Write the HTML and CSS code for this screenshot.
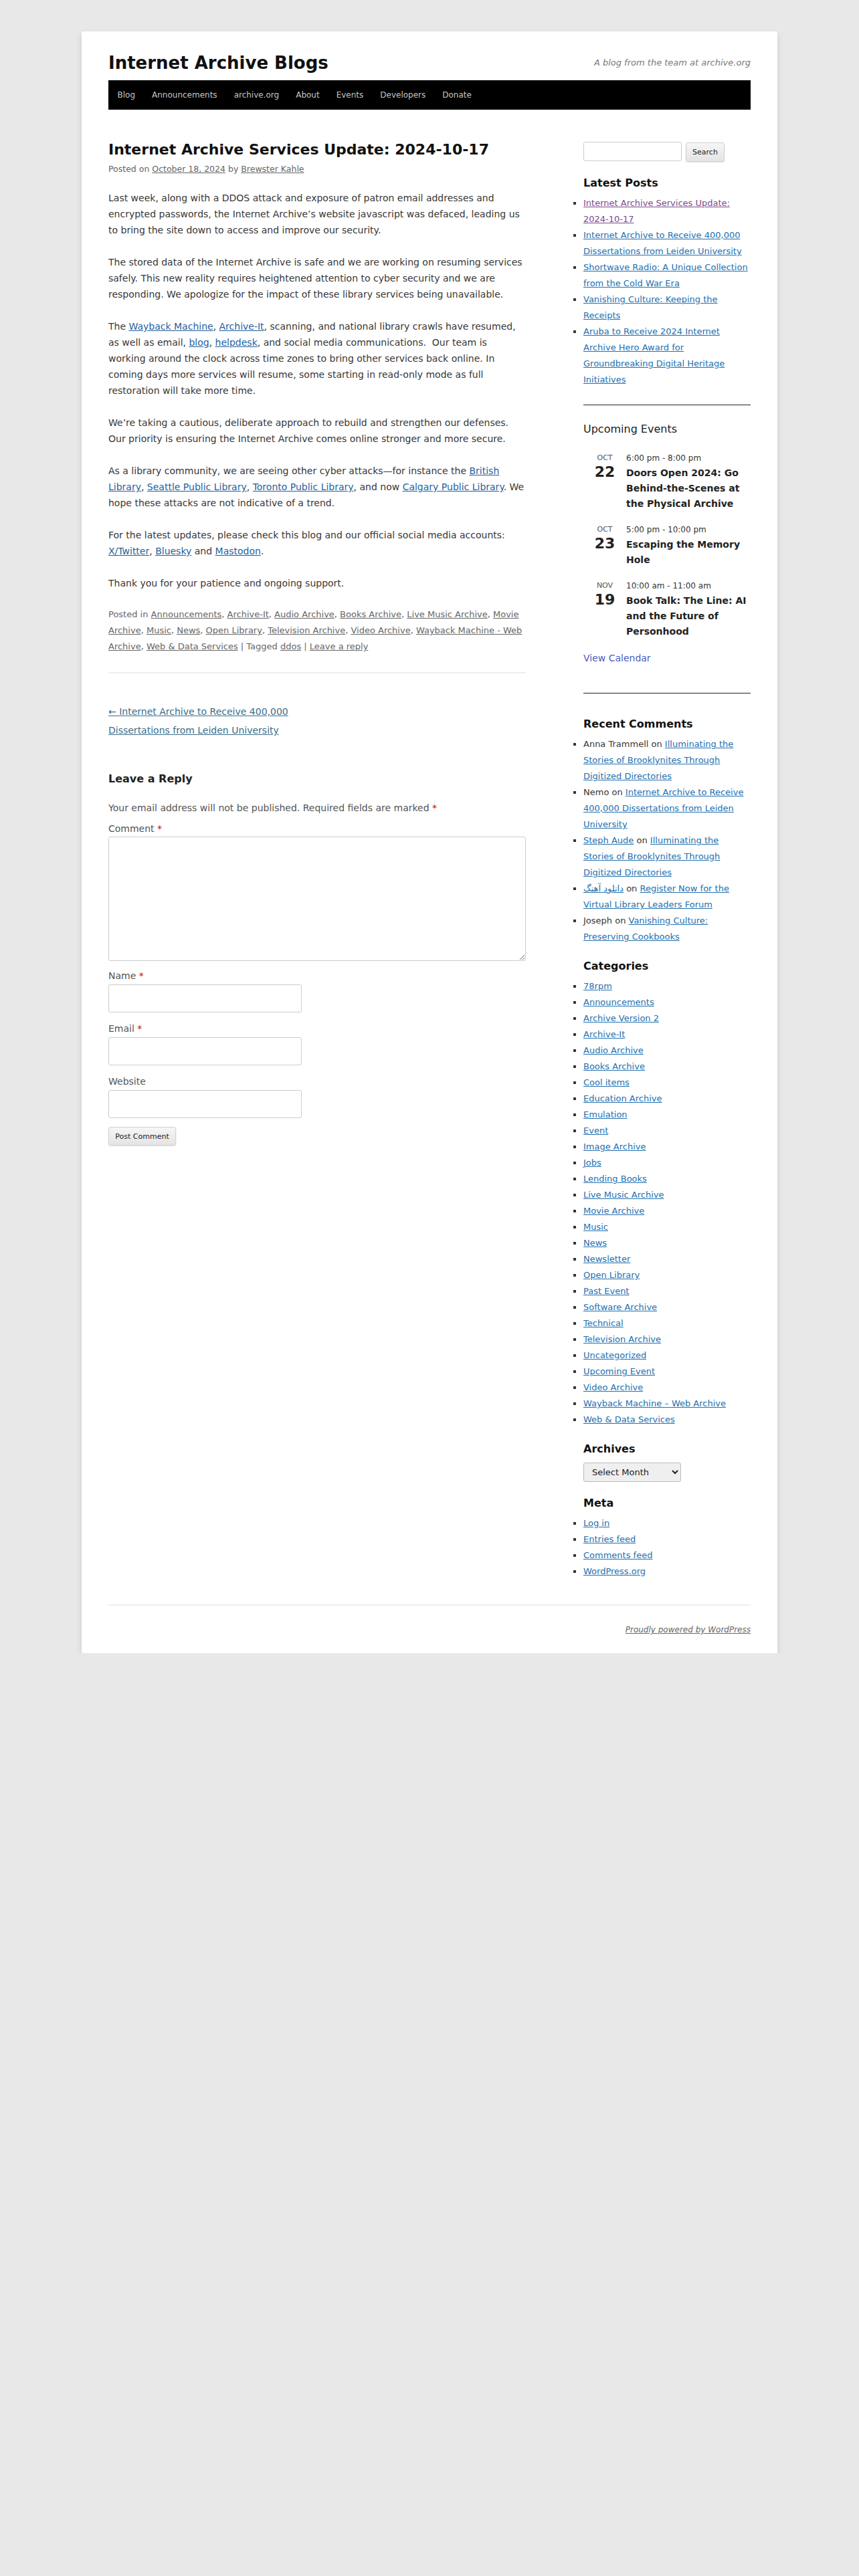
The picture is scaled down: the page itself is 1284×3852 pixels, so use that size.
FILE: index.html
```html
<!DOCTYPE html>
<html lang="en">
<head>
    <meta charset="UTF-8">
    <meta name="viewport" content="width=device-width, initial-scale=1.0">
    <title>Internet Archive Services Update: 2024-10-17 | Internet Archive Blogs</title>
    <link rel="stylesheet" href="styles.css">
</head>
<body>
    <div class="page">
        <header class="site-header">
            <div class="branding">
                <h1 class="site-title"><a href="#">Internet Archive Blogs</a></h1>
                <p class="site-description">A blog from the team at archive.org</p>
            </div>
            <nav class="main-nav">
                <ul>
                    <li><a href="#">Blog</a></li>
                    <li><a href="#">Announcements</a></li>
                    <li><a href="#">archive.org</a></li>
                    <li><a href="#">About</a></li>
                    <li><a href="#">Events</a></li>
                    <li><a href="#">Developers</a></li>
                    <li><a href="#">Donate</a></li>
                </ul>
            </nav>
        </header>

        <div class="site-body">
            <main class="content">
                <article class="post">
                    <h2 class="entry-title">Internet Archive Services Update: 2024-10-17</h2>
                    <div class="entry-meta">Posted on <a href="#">October 18, 2024</a> by <a href="#">Brewster Kahle</a></div>

                    <div class="entry-content">
                        <p>Last week, along with a DDOS attack and exposure of patron email addresses and encrypted passwords, the Internet Archive&rsquo;s website javascript was defaced, leading us to bring the site down to access and improve our security.</p>
                        <p>The stored data of the Internet Archive is safe and we are working on resuming services safely. This new reality requires heightened attention to cyber security and we are responding. We apologize for the impact of these library services being unavailable.</p>
                        <p>The <a href="#">Wayback Machine</a>, <a href="#">Archive-It</a>, scanning, and national library crawls have resumed, as well as email, <a href="#">blog</a>, <a href="#">helpdesk</a>, and social media communications.&nbsp; Our team is working around the clock across time zones to bring other services back online. In coming days more services will resume, some starting in read-only mode as full restoration will take more time.</p>
                        <p>We&rsquo;re taking a cautious, deliberate approach to rebuild and strengthen our defenses. Our priority is ensuring the Internet Archive comes online stronger and more secure.</p>
                        <p>As a library community, we are seeing other cyber attacks&mdash;for instance the <a href="#">British Library</a>, <a href="#">Seattle Public Library</a>, <a href="#">Toronto Public Library</a>, and now <a href="#">Calgary Public Library</a>. We hope these attacks are not indicative of a trend.</p>
                        <p>For the latest updates, please check this blog and our official social media accounts: <a href="#">X/Twitter</a>, <a href="#">Bluesky</a> and <a href="#">Mastodon</a>.</p>
                        <p>Thank you for your patience and ongoing support.</p>
                    </div>

                    <footer class="entry-footer">
                        Posted in <a href="#">Announcements</a>, <a href="#">Archive-It</a>, <a href="#">Audio Archive</a>, <a href="#">Books Archive</a>, <a href="#">Live Music Archive</a>, <a href="#">Movie Archive</a>, <a href="#">Music</a>, <a href="#">News</a>, <a href="#">Open Library</a>, <a href="#">Television Archive</a>, <a href="#">Video Archive</a>, <a href="#">Wayback Machine - Web Archive</a>, <a href="#">Web &amp; Data Services</a> | Tagged <a href="#">ddos</a> | <a href="#">Leave a reply</a>
                    </footer>
                </article>

                <nav class="post-nav">
                    <div class="nav-previous"><a href="#">&larr; Internet Archive to Receive 400,000 Dissertations from Leiden University</a></div>
                </nav>

                <section class="comments">
                    <h3 class="reply-title">Leave a Reply</h3>
                    <form class="comment-form">
                        <p class="comment-notes">Your email address will not be published. Required fields are marked <span class="required">*</span></p>
                        <div class="field field-comment">
                            <label for="comment">Comment <span class="required">*</span></label>
                            <textarea id="comment"></textarea>
                        </div>
                        <div class="field">
                            <label for="author">Name <span class="required">*</span></label>
                            <input type="text" id="author">
                        </div>
                        <div class="field">
                            <label for="email">Email <span class="required">*</span></label>
                            <input type="text" id="email">
                        </div>
                        <div class="field">
                            <label for="url">Website</label>
                            <input type="text" id="url">
                        </div>
                        <button type="submit" class="btn">Post Comment</button>
                    </form>
                </section>
            </main>

            <aside class="sidebar">
                <form class="search-form">
                    <input type="text" class="search-input">
                    <button type="submit" class="btn search-btn">Search</button>
                </form>

                <section class="widget">
                    <h3 class="widget-title">Latest Posts</h3>
                    <ul>
                        <li><a href="#" class="visited">Internet Archive Services Update: 2024-10-17</a></li>
                        <li><a href="#">Internet Archive to Receive 400,000 Dissertations from Leiden University</a></li>
                        <li><a href="#">Shortwave Radio: A Unique Collection from the Cold War Era</a></li>
                        <li><a href="#">Vanishing Culture: Keeping the Receipts</a></li>
                        <li><a href="#">Aruba to Receive 2024 Internet Archive Hero Award for Groundbreaking Digital Heritage Initiatives</a></li>
                    </ul>
                </section>

                <section class="widget widget-events">
                    <h3 class="events-title">Upcoming Events</h3>
                    <ul class="events">
                        <li class="event">
                            <div class="event-date"><span class="month">OCT</span><span class="day">22</span></div>
                            <div class="event-info">
                                <div class="event-time">6:00 pm - 8:00 pm</div>
                                <div class="event-name">Doors Open 2024: Go Behind-the-Scenes at the Physical Archive</div>
                            </div>
                        </li>
                        <li class="event">
                            <div class="event-date"><span class="month">OCT</span><span class="day">23</span></div>
                            <div class="event-info">
                                <div class="event-time">5:00 pm - 10:00 pm</div>
                                <div class="event-name">Escaping the Memory Hole</div>
                            </div>
                        </li>
                        <li class="event">
                            <div class="event-date"><span class="month">NOV</span><span class="day">19</span></div>
                            <div class="event-info">
                                <div class="event-time">10:00 am - 11:00 am</div>
                                <div class="event-name">Book Talk: The Line: AI and the Future of Personhood</div>
                            </div>
                        </li>
                    </ul>
                    <a href="#" class="view-calendar">View Calendar</a>
                </section>

                <section class="widget widget-after-rule">
                    <h3 class="widget-title">Recent Comments</h3>
                    <ul>
                        <li>Anna Trammell on <a href="#">Illuminating the Stories of Brooklynites Through Digitized Directories</a></li>
                        <li>Nemo on <a href="#">Internet Archive to Receive 400,000 Dissertations from Leiden University</a></li>
                        <li><a href="#">Steph Aude</a> on <a href="#">Illuminating the Stories of Brooklynites Through Digitized Directories</a></li>
                        <li><a href="#">دانلود آهنگ</a> on <a href="#">Register Now for the Virtual Library Leaders Forum</a></li>
                        <li>Joseph on <a href="#">Vanishing Culture: Preserving Cookbooks</a></li>
                    </ul>
                </section>

                <section class="widget">
                    <h3 class="widget-title">Categories</h3>
                    <ul>
                        <li><a href="#">78rpm</a></li>
                        <li><a href="#">Announcements</a></li>
                        <li><a href="#">Archive Version 2</a></li>
                        <li><a href="#">Archive-It</a></li>
                        <li><a href="#">Audio Archive</a></li>
                        <li><a href="#">Books Archive</a></li>
                        <li><a href="#">Cool items</a></li>
                        <li><a href="#">Education Archive</a></li>
                        <li><a href="#">Emulation</a></li>
                        <li><a href="#">Event</a></li>
                        <li><a href="#">Image Archive</a></li>
                        <li><a href="#">Jobs</a></li>
                        <li><a href="#">Lending Books</a></li>
                        <li><a href="#">Live Music Archive</a></li>
                        <li><a href="#">Movie Archive</a></li>
                        <li><a href="#">Music</a></li>
                        <li><a href="#">News</a></li>
                        <li><a href="#">Newsletter</a></li>
                        <li><a href="#">Open Library</a></li>
                        <li><a href="#">Past Event</a></li>
                        <li><a href="#">Software Archive</a></li>
                        <li><a href="#">Technical</a></li>
                        <li><a href="#">Television Archive</a></li>
                        <li><a href="#">Uncategorized</a></li>
                        <li><a href="#">Upcoming Event</a></li>
                        <li><a href="#">Video Archive</a></li>
                        <li><a href="#">Wayback Machine &ndash; Web Archive</a></li>
                        <li><a href="#">Web &amp; Data Services</a></li>
                    </ul>
                </section>

                <section class="widget">
                    <h3 class="widget-title">Archives</h3>
                    <select class="archive-select">
                        <option>Select Month</option>
                    </select>
                </section>

                <section class="widget">
                    <h3 class="widget-title">Meta</h3>
                    <ul>
                        <li><a href="#">Log in</a></li>
                        <li><a href="#">Entries feed</a></li>
                        <li><a href="#">Comments feed</a></li>
                        <li><a href="#">WordPress.org</a></li>
                    </ul>
                </section>
            </aside>
        </div>

        <footer class="site-footer">
            <a href="#">Proudly powered by WordPress</a>
        </footer>
    </div>
</body>
</html>
```

FILE: styles.css
```css
body {
    margin: 0;
    background-color: #e8e8e8;
    font-family: "DejaVu Sans", sans-serif;
    font-size: 14px;
    line-height: 24px;
    color: #373737;
}
a {
    color: #1f5f9e;
}
.page {
    width: 960px;
    margin: 47px auto 0;
    padding: 0 40px;
    background: #fff;
    box-shadow: 0 4px 8px rgba(0, 0, 0, 0.13);
}

/* header */
.site-header {
    padding-top: 29px;
}
.branding {
    display: flex;
    justify-content: space-between;
    align-items: center;
    margin-bottom: 8px;
}
.site-title {
    margin: 0;
    font-size: 26px;
    line-height: 36px;
    font-weight: bold;
}
.site-title a {
    color: #111;
    text-decoration: none;
}
.site-description {
    margin: 0;
    font-size: 13px;
    font-style: italic;
    color: #7a7a7a;
}
.main-nav {
    background: #000;
    height: 44px;
}
.main-nav ul {
    display: flex;
    margin: 0;
    padding: 0 0 0 1px;
    list-style: none;
}
.main-nav a {
    display: block;
    padding: 0 12.5px;
    line-height: 44px;
    font-size: 12px;
    color: #c6c6c6;
    text-decoration: none;
}

/* layout */
.site-body {
    display: flex;
    align-items: flex-start;
    padding: 45px 0 37px;
}
.content {
    width: 624px;
}
.sidebar {
    width: 250px;
    margin-left: auto;
    padding-top: 3px;
}

/* post */
.entry-title {
    margin: 0;
    font-size: 22px;
    line-height: 30px;
    color: #111;
}
.entry-meta {
    margin-top: 4px;
    font-size: 12.5px;
    line-height: 20px;
    color: #666;
}
.entry-meta a,
.entry-footer a {
    color: #666;
}
.entry-content {
    margin-top: 21px;
}
.entry-content p {
    margin: 0 0 24px;
}
.entry-footer {
    margin-top: -1px;
    font-size: 13px;
    line-height: 24px;
    color: #666;
}
.post {
    padding-bottom: 26px;
    border-bottom: 2px solid #eee;
}
.post-nav {
    margin-top: 43px;
    font-size: 14px;
    line-height: 28px;
}
.nav-previous {
    width: 50%;
}
.nav-previous a {
    color: #3a6e8a;
}

/* comment form */
.comments {
    margin-top: 47px;
}
.reply-title {
    margin: 0;
    font-size: 16px;
    line-height: 24px;
    color: #222;
}
.comment-notes {
    margin: 19px 0 7px;
    color: #555;
}
.required {
    color: #c00;
}
.field {
    margin-bottom: 12px;
}
.field-comment {
    margin-bottom: 10px;
}
.field label {
    display: block;
    color: #555;
}
.field textarea,
.field input {
    display: block;
    box-sizing: border-box;
    border: 1px solid #ccc;
    border-radius: 3px;
    font-family: "DejaVu Sans", sans-serif;
    font-size: 13px;
    background: #fff;
}
.field textarea {
    width: 624px;
    height: 186px;
}
.field input {
    width: 289px;
    height: 42px;
    margin-top: 1px;
}
.btn {
    font-family: "DejaVu Sans", sans-serif;
    font-size: 11px;
    color: #222;
    background: linear-gradient(#f6f6f6, #e4e4e4);
    border: 1px solid #d2d2d2;
    border-radius: 3px;
    box-shadow: 0 1px 2px rgba(0, 0, 0, 0.12);
    cursor: pointer;
}
.comment-form .btn {
    width: 101px;
    height: 28px;
    margin-top: 1px;
}

/* sidebar */
.search-form {
    display: flex;
    gap: 6px;
}
.search-input {
    box-sizing: border-box;
    width: 147px;
    height: 29px;
    border: 1px solid #ccc;
    border-radius: 3px;
}
.search-btn {
    width: 58px;
    height: 29px;
    margin-top: 1px;
}
.widget {
    margin-top: 20px;
}
.widget-title {
    margin: 0 0 6px;
    font-size: 16px;
    line-height: 24px;
    color: #111;
}
.widget ul {
    margin: 0;
    padding: 0;
    list-style: square;
    font-size: 13px;
    line-height: 24px;
}
.widget li a {
    color: #2270b0;
}
.widget li a.visited {
    color: #7b4a8c;
}
.widget-events {
    margin-top: 25px;
    padding: 24px 0 40px;
    border-top: 1px solid #222;
    border-bottom: 1px solid #222;
}
.events-title {
    margin: 0;
    font-size: 16px;
    line-height: 24px;
    font-weight: normal;
    color: #222;
}
.widget ul.events {
    margin-top: 20px;
    list-style: none;
}
.event {
    display: grid;
    grid-template-columns: 64px 1fr;
    margin-bottom: 16px;
}
.event-date {
    display: flex;
    flex-direction: column;
    align-items: center;
    margin-top: 3px;
    color: #222;
}
.month {
    font-size: 11px;
    line-height: 16px;
    color: #555;
}
.day {
    font-size: 22px;
    line-height: 26px;
    font-weight: bold;
}
.event-time {
    font-size: 12px;
    line-height: 22px;
    color: #333;
}
.event-name {
    font-size: 14px;
    line-height: 23px;
    font-weight: bold;
    color: #222;
}
.view-calendar {
    display: block;
    margin-top: 11px;
    color: #4a5cc0;
    text-decoration: none;
}
.widget-after-rule {
    margin-top: 34px;
}
.archive-select {
    width: 146px;
    height: 29px;
    margin-top: 2px;
    padding: 0 8px;
    font-family: "DejaVu Sans", sans-serif;
    font-size: 13px;
    color: #222;
    background: #efefef;
    border: 1px solid #bbb;
    border-radius: 3px;
}

/* footer */
.site-footer {
    border-top: 2px solid #eee;
    padding: 26px 0 25px;
    text-align: right;
    font-size: 12px;
    line-height: 20px;
    font-style: italic;
}
.site-footer a {
    color: #666;
}
```
